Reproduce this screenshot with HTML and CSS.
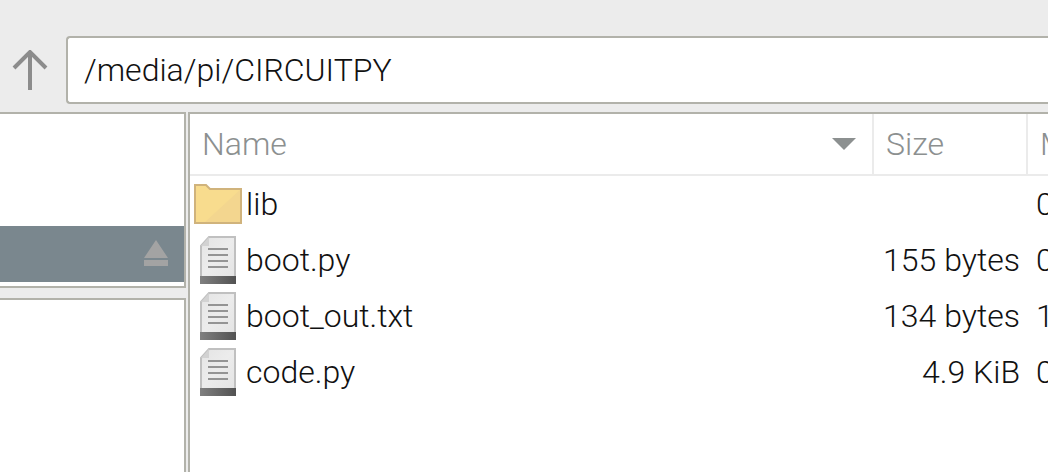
FILE: index.html
```html
<!DOCTYPE html>
<html lang="en">
<head>
<meta charset="utf-8">
<title>CIRCUITPY</title>
<link rel="stylesheet" href="styles.css">
</head>
<body>
<svg class="defs" aria-hidden="true">
  <defs>
    <linearGradient id="base" x1="0" x2="1"><stop offset="0" stop-color="#808080"/><stop offset="1" stop-color="#525252"/></linearGradient>
    <linearGradient id="paper" x1="0" y1="0" x2="1" y2="1"><stop offset="0" stop-color="#e4e4e4"/><stop offset="0.5" stop-color="#ececec"/><stop offset="1" stop-color="#e4e4e4"/></linearGradient>
    <symbol id="file" viewBox="0 0 48 48">
      <path d="M7 10 15 1H41V41H7Z" fill="url(#paper)" stroke="#c0c0c0" stroke-width="2"/>
      <path d="M7 10 15 1V10Z" fill="#d2d2d2"/>
      <path d="M14 13H34M14 19H34M14 25H34M14 31H34" stroke="#949494" stroke-width="2"/>
      <path d="M6 40H42V48H6Z" fill="url(#base)"/>
    </symbol>
    <symbol id="folder" viewBox="0 0 48 48">
      <path d="M1 5H12L16 9H47V43H1Z" fill="#f8dc8e"/>
      <path d="M47 9V43H10Z" fill="#f3d68f"/>
      <path d="M1 5H12L16 9H47V43H1Z" fill="none" stroke="#d0b37c" stroke-width="2"/>
    </symbol>
  </defs>
</svg>
<div class="window">
  <header class="toolbar">
    <button class="up" aria-label="Parent folder">
      <svg width="36" height="40" viewBox="0 0 36 40"><path d="M18 40V3M2 18 18 2 34 18" fill="none" stroke="#8c8c8c" stroke-width="4"/></svg>
    </button>
    <input class="path" type="text" aria-label="Location" value="/media/pi/CIRCUITPY">
  </header>
  <main class="panes">
    <aside class="side">
      <div class="places">
        <div class="volume">
          <button class="eject" aria-label="Eject">
            <svg width="24" height="26" viewBox="0 0 24 26"><path d="M12 0 24 18H0ZM0 20H24V26H0Z" fill="#a3a3a3"/></svg>
          </button>
        </div>
      </div>
      <div class="tree"></div>
    </aside>
    <section class="files">
      <table class="list">
        <thead>
          <tr>
            <th class="name"><div class="sort">Name<svg width="24" height="12" viewBox="0 0 24 12"><path d="M0 0H24L12 12Z" fill="#8c9090"/></svg></div></th>
            <th class="size">Size</th>
            <th class="modified">M</th>
          </tr>
        </thead>
        <tbody>
          <tr><td><div class="entry"><svg class="icon"><use href="#folder"/></svg>lib</div></td><td class="size"></td><td class="modified">0</td></tr>
          <tr><td><div class="entry"><svg class="icon"><use href="#file"/></svg>boot.py</div></td><td class="size">155 bytes</td><td class="modified">0</td></tr>
          <tr><td><div class="entry"><svg class="icon"><use href="#file"/></svg>boot_out.txt</div></td><td class="size">134 bytes</td><td class="modified">1</td></tr>
          <tr><td><div class="entry"><svg class="icon"><use href="#file"/></svg>code.py</div></td><td class="size">4.9 KiB</td><td class="modified">0</td></tr>
        </tbody>
      </table>
    </section>
  </main>
</div>
</body>
</html>
```
FILE: styles.css
```css
* {
  box-sizing: border-box;
}

body {
  margin: 0;
  background: #ececec;
  color: #111;
  font: 300 32px/40px Roboto, "Liberation Sans", sans-serif;
  overflow: hidden;
}

svg {
  display: block;
  flex: none;
}

.defs {
  position: absolute;
  width: 0;
  height: 0;
}

.window {
  display: flex;
  flex-direction: column;
  height: 100vh;
}

.toolbar {
  display: flex;
  align-items: center;
  gap: 18px;
  padding: 36px 0 8px 12px;
}

button {
  border: 0;
  padding: 0;
  background: none;
}

.path {
  flex: 1;
  min-width: 0;
  height: 68px;
  padding: 0 16px;
  border: 2px solid #b2b2aa;
  border-right: 0;
  border-radius: 4px 0 0 4px;
  background: #fff;
  color: inherit;
  font: inherit;
  outline: 0;
}

.panes {
  display: flex;
  flex: 1;
  gap: 2px;
  min-height: 0;
}

.side {
  display: flex;
  flex-direction: column;
  gap: 10px;
  width: 186px;
}

.places,
.tree {
  border: 2px solid #b2b2aa;
  border-left: 0;
  background: #fff;
}

.places {
  padding: 112px 0 4px;
}

.tree {
  flex: 1;
  border-bottom: 0;
}

.volume {
  display: flex;
  align-items: center;
  justify-content: flex-end;
  height: 56px;
  padding: 0 16px 2px 0;
  background: #7a878e;
}

.files {
  flex: 1;
  min-width: 0;
  border: solid #b2b2aa;
  border-width: 2px 0 0 2px;
  background: #fff;
}

.list {
  width: 100%;
  table-layout: fixed;
  border-collapse: separate;
  border-spacing: 0;
}

th,
td {
  height: 56px;
  padding: 0;
  overflow: hidden;
  white-space: nowrap;
}

th {
  height: 62px;
  padding-left: 12px;
  border: solid #ebebeb;
  border-width: 0 2px 2px 0;
  color: #8c9090;
  font-weight: 300;
  text-align: left;
}

th.size {
  width: 154px;
}

th.modified {
  width: 20px;
  border-right: 0;
}

.sort {
  display: flex;
  align-items: center;
  justify-content: space-between;
  padding-right: 16px;
}

.entry {
  display: flex;
  align-items: center;
  gap: 4px;
  padding-left: 4px;
}

.icon {
  width: 48px;
  height: 48px;
}

td.size {
  padding-right: 8px;
  text-align: right;
}

td.modified {
  padding-left: 8px;
}
```
